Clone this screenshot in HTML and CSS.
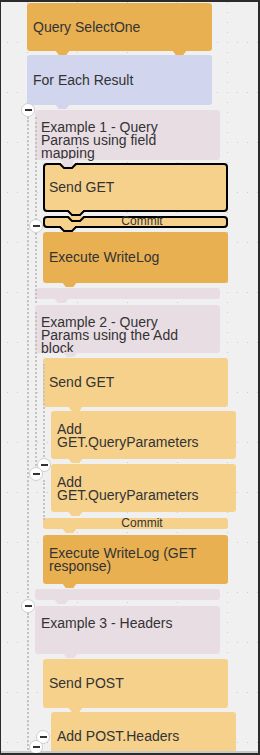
FILE: index.html
```html
<!DOCTYPE html>
<html lang="en">
<head>
  <meta charset="UTF-8" />
  <meta name="viewport" content="width=device-width, initial-scale=1.0"/>
  <title>Workspace</title>
  <link rel="stylesheet" href="styles.css">
</head>
<body>
  <div class="workspace">
    <div class="stack">
      <div class="block orange lv0 gap1 h48">
        <span class="label">Query SelectOne</span>
        <i class="tab tab-d"></i><i class="tab tab-r"></i>
      </div>
      <div class="block lavender lv0 gap4 h50">
        <span class="label">For Each Result</span>
        <i class="tab tab-d"></i>
      </div>
      <div class="block pink head lv1 gap5 h50">
        <span class="label">Example 1 - Query<br>Params using field<br>mapping</span>
        <i class="tab tab-c"></i>
      </div>
      <div class="block light selected lv2 gap3 h49">
        <svg class="notch n-a" width="20" height="8" viewBox="-2 0 20 8">
          <polygon points="0,0 16,0 12,4 4,4" fill="#e9dde4"/>
          <polyline points="-2,1 0,1 4,5 12,5 16,1 18,1" fill="none" stroke="#000" stroke-width="2"/>
        </svg>
        <span class="label">Send GET</span>
        <svg class="lug n-c" width="20" height="8" viewBox="-2 0 20 8">
          <polygon points="0,0 16,0 12,4 4,4" fill="#f5d18c"/>
          <polyline points="-2,1 0,1 4,5 12,5 16,1 18,1" fill="none" stroke="#000" stroke-width="2"/>
        </svg>
      </div>
      <div class="block light selected commit lv2 gap4 h12">
        <svg class="notch n-c" width="20" height="8" viewBox="-2 0 20 8">
          <polygon points="0,0 16,0 12,4 4,4" fill="#f5d18c"/>
          <polyline points="-2,1 0,1 4,5 12,5 16,1 18,1" fill="none" stroke="#000" stroke-width="2"/>
        </svg>
        <span class="label">Commit</span>
        <svg class="lug n-a" width="20" height="8" viewBox="-2 0 20 8">
          <polygon points="0,0 16,0 12,4 4,4" fill="#f5d18c"/>
          <polyline points="-2,1 0,1 4,5 12,5 16,1 18,1" fill="none" stroke="#000" stroke-width="2"/>
        </svg>
      </div>
      <div class="block orange lv2 gap4 h51">
        <span class="label">Execute WriteLog</span>
        <i class="tab tab-b"></i>
      </div>
      <div class="block pink foot lv1 gap5 h11">
        <i class="tab tab-b"></i>
      </div>

      <div class="block pink head lv1 gap6 h48">
        <span class="label">Example 2 - Query<br>Params using the Add<br>block</span>
        <i class="tab tab-d"></i>
      </div>
      <div class="block light lv2 gap5 h49">
        <span class="label">Send GET</span>
        <i class="tab tab-c"></i>
      </div>
      <div class="block light two lv3 gap4 h48">
        <span class="label">Add<br>GET.QueryParameters</span>
        <i class="tab tab-a"></i>
      </div>
      <div class="block light two lv3 gap5 h48">
        <span class="label">Add<br>GET.QueryParameters</span>
        <i class="tab tab-a"></i>
      </div>
      <div class="block light commit lv2 gap6 h11">
        <span class="label">Commit</span>
        <i class="tab tab-b"></i>
      </div>
      <div class="block orange two lv2 gap6 h49">
        <span class="label">Execute WriteLog (GET<br>response)</span>
        <i class="tab tab-b"></i>
      </div>
      <div class="block pink foot lv1 gap5 h11">
        <i class="tab tab-b"></i>
      </div>

      <div class="block pink head lv1 gap6 h48">
        <span class="label">Example 3 - Headers</span>
        <i class="tab tab-d"></i>
      </div>
      <div class="block light lv2 gap5 h49">
        <span class="label">Send POST</span>
        <i class="tab tab-c"></i>
      </div>
      <div class="block light lv3 gap4 h48">
        <span class="label">Add POST.Headers</span>
      </div>
    </div>

    <!-- collapse guides -->
    <span class="guide g1"></span>
    <span class="guide g2"></span>
    <span class="guide g3"></span>
    <span class="guide g4"></span>
    <span class="guide g5"></span>
    <span class="guide g6"></span>
    <span class="guide g7"></span>

    <span class="minus m1"></span>
    <span class="minus m2"></span>
    <span class="minus m3"></span>
    <span class="minus m4"></span>
    <span class="minus m5"></span>
    <span class="minus m6"></span>
    <span class="minus m7"></span>
  </div>
</body>
</html>
```

FILE: styles.css
```css
body {
  margin: 0;
  font-family: "Liberation Sans", Arial, sans-serif;
}
.workspace {
  position: relative;
  width: 260px;
  height: 755px;
  box-sizing: border-box;
  border: 1px solid #2b2b2b;
  border-width: 2px 2px 2px 1px;
  background-color: #f0f0f0;
  background-image:
    conic-gradient(at 1px 1px, transparent 270deg, #cdcdcd 270deg),
    conic-gradient(at 1px 1px, transparent 270deg, #cdcdcd 270deg);
  background-size: 50px 10px, 10px 50px;
  background-position: 26px 0, 6px 40px;
  overflow: hidden;
}
.workspace::after {
  content: "";
  position: absolute;
  left: 0;
  right: 0;
  bottom: 0;
  height: 2px;
  background: #c9c9c9;
}
.stack {
  display: flex;
  flex-direction: column;
  align-items: flex-start;
}

/* blocks */
.block {
  position: relative;
  width: 185px;
  box-sizing: border-box;
  border-radius: 3px;
  padding: 0 6px;
  display: flex;
  align-items: center;
  color: #333;
  font-size: 14px;
  line-height: 15px;
}
.orange { background: #e9b052; }
.light { background: #f5d18c; }
.lavender { background: #d1d5ee; }
.pink { background: #e9dde4; }

.two {
  line-height: 13px;
  padding-top: 1px;
}
.head {
  align-items: flex-start;
  padding-top: 11px;
  line-height: 13px;
}
.selected {
  border: 2px solid #000;
  border-radius: 4px;
  padding: 0 4px;
}
.commit {
  font-size: 12px;
  line-height: 12px;
  justify-content: center;
  padding-left: 19px;
}
.commit.selected {
  padding-left: 17px;
}
.commit .label {
  position: relative;
  top: -1px;
}
.label {
  position: relative;
  z-index: 1;
  white-space: nowrap;
}

.lv0 { margin-left: 26px; }
.lv1 { margin-left: 34px; }
.lv2 { margin-left: 42px; }
.lv3 { margin-left: 50px; }

.gap1 { margin-top: 1px; }
.gap3 { margin-top: 3px; }
.gap4 { margin-top: 4px; }
.gap5 { margin-top: 5px; }
.gap6 { margin-top: 6px; }

.h11 { height: 11px; }
.h12 { height: 12px; }
.h48 { height: 48px; }
.h49 { height: 49px; }
.h50 { height: 50px; }
.h51 { height: 51px; }

/* connection tabs */
.tab {
  position: absolute;
  top: 100%;
  width: 15px;
  height: 5px;
  margin-top: -1px;
  background: inherit;
  clip-path: polygon(0 0, 100% 0, 75% 100%, 25% 100%);
  z-index: 2;
}
.tab-a { left: 17px; }
.tab-b { left: 19px; }
.tab-c { left: 25px; }
.tab-d { left: 28px; }
.tab-r { left: 145px; }

.notch, .lug {
  position: absolute;
  z-index: 3;
}
.notch { top: -2px; }
.lug { bottom: -8px; }
.notch.n-a, .lug.n-a { left: 13px; }
.notch.n-c, .lug.n-c { left: 21px; }

/* collapse guides */
.guide {
  position: absolute;
  width: 0;
  border-left: 2px dotted #c3c3c3;
}
.g1 { left: 26px; top: 115px; height: 489px; }
.g2 { left: 26px; top: 611px; height: 140px; }
.g3 { left: 34px; top: 115px; height: 103px; }
.g4 { left: 34px; top: 231px; height: 70px; }
.g5 { left: 34px; top: 310px; height: 158px; }
.g6 { left: 42px; top: 362px; height: 97px; }
.g7 { left: 42px; top: 478px; height: 40px; }

.minus {
  position: absolute;
  width: 14px;
  height: 14px;
  box-sizing: border-box;
  border: 1px solid #cfcfcf;
  border-radius: 50%;
  background: #fff;
  z-index: 4;
}
.minus::after {
  content: "";
  position: absolute;
  left: 2.5px;
  top: 5px;
  width: 7px;
  height: 2px;
  background: #333;
}
.m1 { left: 20px; top: 101px; }
.m2 { left: 28px; top: 217px; }
.m3 { left: 36px; top: 456px; }
.m4 { left: 28px; top: 465px; }
.m5 { left: 20px; top: 597px; }
.m6 { left: 35px; top: 728px; }
.m7 { left: 28px; top: 738px; }
```
